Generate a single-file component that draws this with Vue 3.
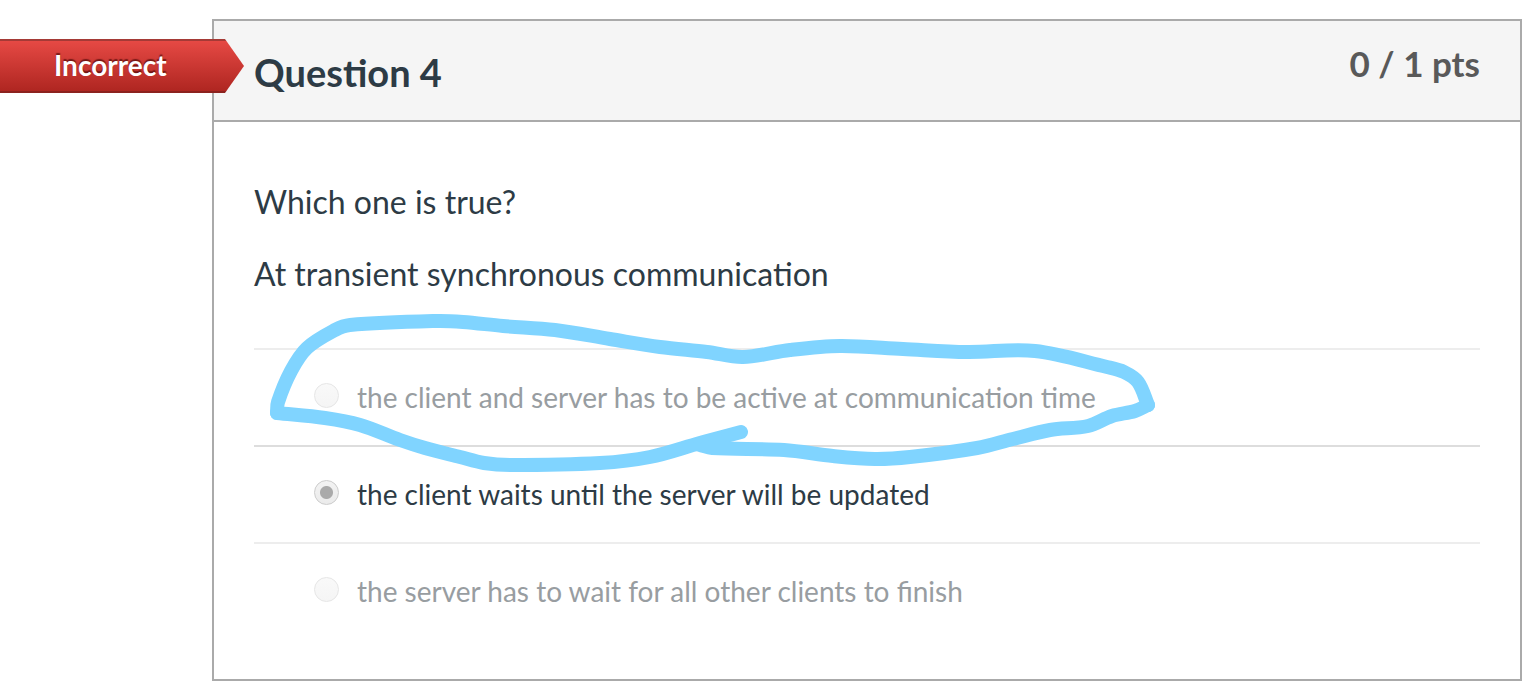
<script setup>
import { ref } from 'vue'

const selected = ref(1)
const answers = [
  'the client and server has to be active at communication time',
  'the client waits until the server will be updated',
  'the server has to wait for all other clients to finish',
]

// Marker strokes; each run is smoothed on its own so the corners between runs stay sharp.
const runs = [
  [[741, 432], [700, 443], [650, 457], [600, 463], [510, 465], [484, 463], [460, 457], [425, 448], [400, 440], [360, 425], [325, 418], [277, 413]],
  [[277, 413], [278, 402], [291, 371], [307, 348], [335, 330], [350, 325], [437, 321], [463, 322], [503, 326], [555, 330], [610, 339], [660, 347], [707, 352], [743, 357], [790, 350], [840, 346], [903, 349], [967, 352], [1035, 351], [1107, 367], [1124, 372], [1138, 382], [1148, 405]],
  [[1148, 405], [1135, 411], [1112, 416], [1088, 426], [1050, 430], [1013, 439], [977, 448], [910, 457], [875, 459], [833, 456], [784, 450], [712, 448], [700, 445]],
]

// Control points follow the neighbours' direction, at a third of each segment's length.
function smooth(p) {
  const unit = (a, b) => {
    const n = Math.hypot(b[0] - a[0], b[1] - a[1])
    return [(b[0] - a[0]) / n, (b[1] - a[1]) / n]
  }
  let d = `M${p[0]}`
  for (let i = 0; i < p.length - 1; i++) {
    const b = p[i]
    const c = p[i + 1]
    const t = unit(p[i - 1] || b, c)
    const u = unit(b, p[i + 2] || c)
    const k = Math.hypot(c[0] - b[0], c[1] - b[1]) / 3
    d += `C${b[0] + t[0] * k},${b[1] + t[1] * k} ${c[0] - u[0] * k},${c[1] - u[1] * k} ${c}`
  }
  return d
}
const strokes = runs.map(smooth)
</script>

<template>
  <main class="page">
    <article class="question">
      <header class="head">
        <h2 class="title">Question 4</h2>
        <span class="points">0 / 1 pts</span>
      </header>
      <div class="body">
        <p class="text">Which one is true?</p>
        <p class="text">At transient synchronous communication</p>
        <div class="answers" role="radiogroup" aria-label="Answers">
          <div
            v-for="(answer, i) in answers"
            :key="i"
            class="answer"
            :class="{ chosen: selected === i }"
          >
            <input :id="`answer-${i}`" v-model="selected" class="radio" type="radio" name="answer" :value="i" />
            <label class="label" :for="`answer-${i}`">{{ answer }}</label>
          </div>
          <svg class="marker" viewBox="254 300 920 180" width="920" height="180" aria-hidden="true">
            <path v-for="(d, i) in strokes" :key="i" :d="d" />
          </svg>
        </div>
      </div>
    </article>
    <div class="ribbon">Incorrect</div>
  </main>
</template>

<style>
body {
  background: #fff;
}
</style>

<style scoped>
.page {
  position: relative;
  padding: 19px 12px 17px 212px;
  font-family: Lato, "Open Sans", sans-serif;
  color: #2d3b45;
}
.question {
  border: 2px solid #aaa;
}
.head {
  display: flex;
  justify-content: space-between;
  align-items: flex-start;
  padding: 20px 40px 17px;
  background: #f5f5f5;
  border-bottom: 2px solid #aaa;
}
.title {
  margin: 0;
  font-size: 38px;
  line-height: 62px;
  font-weight: 700;
}
.points {
  font-size: 35px;
  line-height: 44px;
  font-weight: 700;
  color: #595959;
}
.body {
  padding: 56px 40px 40px;
}
.text {
  margin: 0 0 24px;
  font-size: 32px;
  line-height: 48px;
}
.answers {
  position: relative;
  padding-top: 26px;
}
.answer {
  display: flex;
  align-items: center;
  gap: 18px;
  height: 95px;
  padding-left: 60px;
  border-top: 2px solid #ededed;
  color: #989da1;
}
.answer.chosen {
  border-top-color: #ddd;
  color: #2d3b45;
}
.radio {
  appearance: none;
  box-sizing: border-box;
  flex: none;
  width: 25px;
  height: 25px;
  margin: 0 0 4px;
  border: 1px solid #e6e6e6;
  border-radius: 50%;
  background: linear-gradient(#f9f9f9, #f5f5f5);
}
.radio:checked {
  border-color: #ccc;
  background: radial-gradient(circle, #aaa 6px, transparent 7px), linear-gradient(#f3f3f3, #ebebeb);
}
.label {
  padding-bottom: 2px;
  font-size: 28px;
  line-height: 40px;
}
.marker {
  position: absolute;
  top: -22px;
  left: 0;
  overflow: visible;
  pointer-events: none;
}
.marker path {
  fill: none;
  stroke: #80d4ff;
  stroke-width: 14px;
  stroke-linecap: round;
  stroke-linejoin: round;
}
.ribbon {
  position: absolute;
  top: 39px;
  left: 0;
  box-sizing: border-box;
  width: 244px;
  height: 54px;
  padding-left: 54px;
  border-top: 2px solid #a53a36;
  border-bottom: 2px solid #8c221e;
  background: linear-gradient(#e64944, #af2621);
  clip-path: polygon(0 0, 225px 0, 100% 50%, 225px 100%, 0 100%);
  font-size: 28px;
  line-height: 48px;
  font-weight: 700;
  color: #fff;
  text-shadow: 0 -2px 1px rgba(60, 0, 0, 0.6);
}
</style>
